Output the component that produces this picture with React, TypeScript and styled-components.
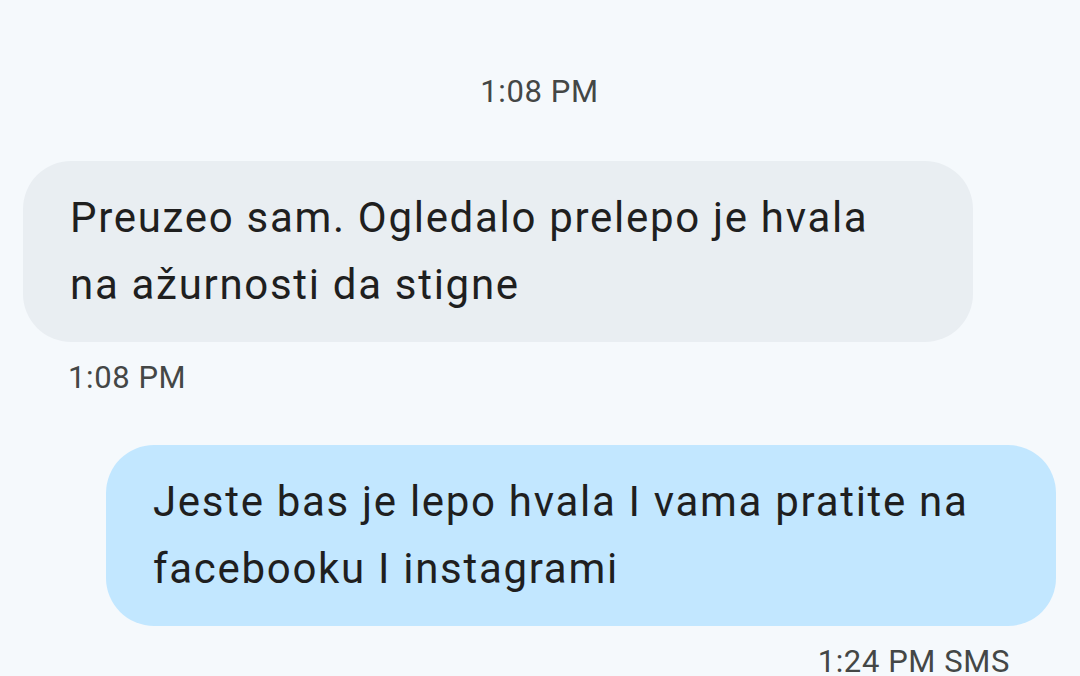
import styled, { createGlobalStyle } from 'styled-components';

const GlobalStyle = createGlobalStyle`
    html, body {
        margin: 0;
        padding: 0;
        background: #f5f9fc;
    }
    body {
        font-family: Roboto, "Noto Sans", sans-serif;
        color: #1f1f1f;
    }
`;

const Thread = styled.main`
    width: 1080px;
    height: 676px;
    overflow: hidden;
    display: flex;
    flex-direction: column;
    padding: 72px 24px 0 23px;
    box-sizing: border-box;
`;

const DayStamp = styled.div`
    text-align: center;
    font-size: 31px;
    letter-spacing: 0.6px;
    line-height: 40px;
    color: #444746;
    margin-bottom: 49px;
`;

const MessageGroup = styled.div<{ $out?: boolean }>`
    display: flex;
    flex-direction: column;
    align-items: ${({ $out }) => ($out ? 'flex-end' : 'flex-start')};
    margin-bottom: 47px;
`;

const Bubble = styled.div<{ $out?: boolean }>`
    width: 950px;
    box-sizing: border-box;
    padding: 23px 46px 24px 47px;
    border-radius: 48px;
    background: ${({ $out }) => ($out ? '#c2e7ff' : '#e9eef2')};
    font-size: 42px;
    letter-spacing: 1.7px;
    line-height: 67px;
    color: #1f1f1f;
`;

const Meta = styled.div<{ $out?: boolean }>`
    font-size: 31px;
    letter-spacing: 0.6px;
    line-height: 40px;
    color: #444746;
    margin-top: 16px;
    padding: ${({ $out }) => ($out ? '0 46px 0 0' : '0 0 0 45px')};
`;

export default function App() {
    return (
        <>
            <GlobalStyle />
            <Thread>
                <DayStamp>1:08 PM</DayStamp>
                <MessageGroup>
                    <Bubble>
                        Preuzeo sam. Ogledalo prelepo je hvala
                        <br />
                        na ažurnosti da stigne
                    </Bubble>
                    <Meta>1:08 PM</Meta>
                </MessageGroup>
                <MessageGroup $out>
                    <Bubble $out>
                        Jeste bas je lepo hvala I vama pratite na
                        <br />
                        facebooku I instagrami
                    </Bubble>
                    <Meta $out>1:24 PM SMS</Meta>
                </MessageGroup>
            </Thread>
        </>
    );
}
